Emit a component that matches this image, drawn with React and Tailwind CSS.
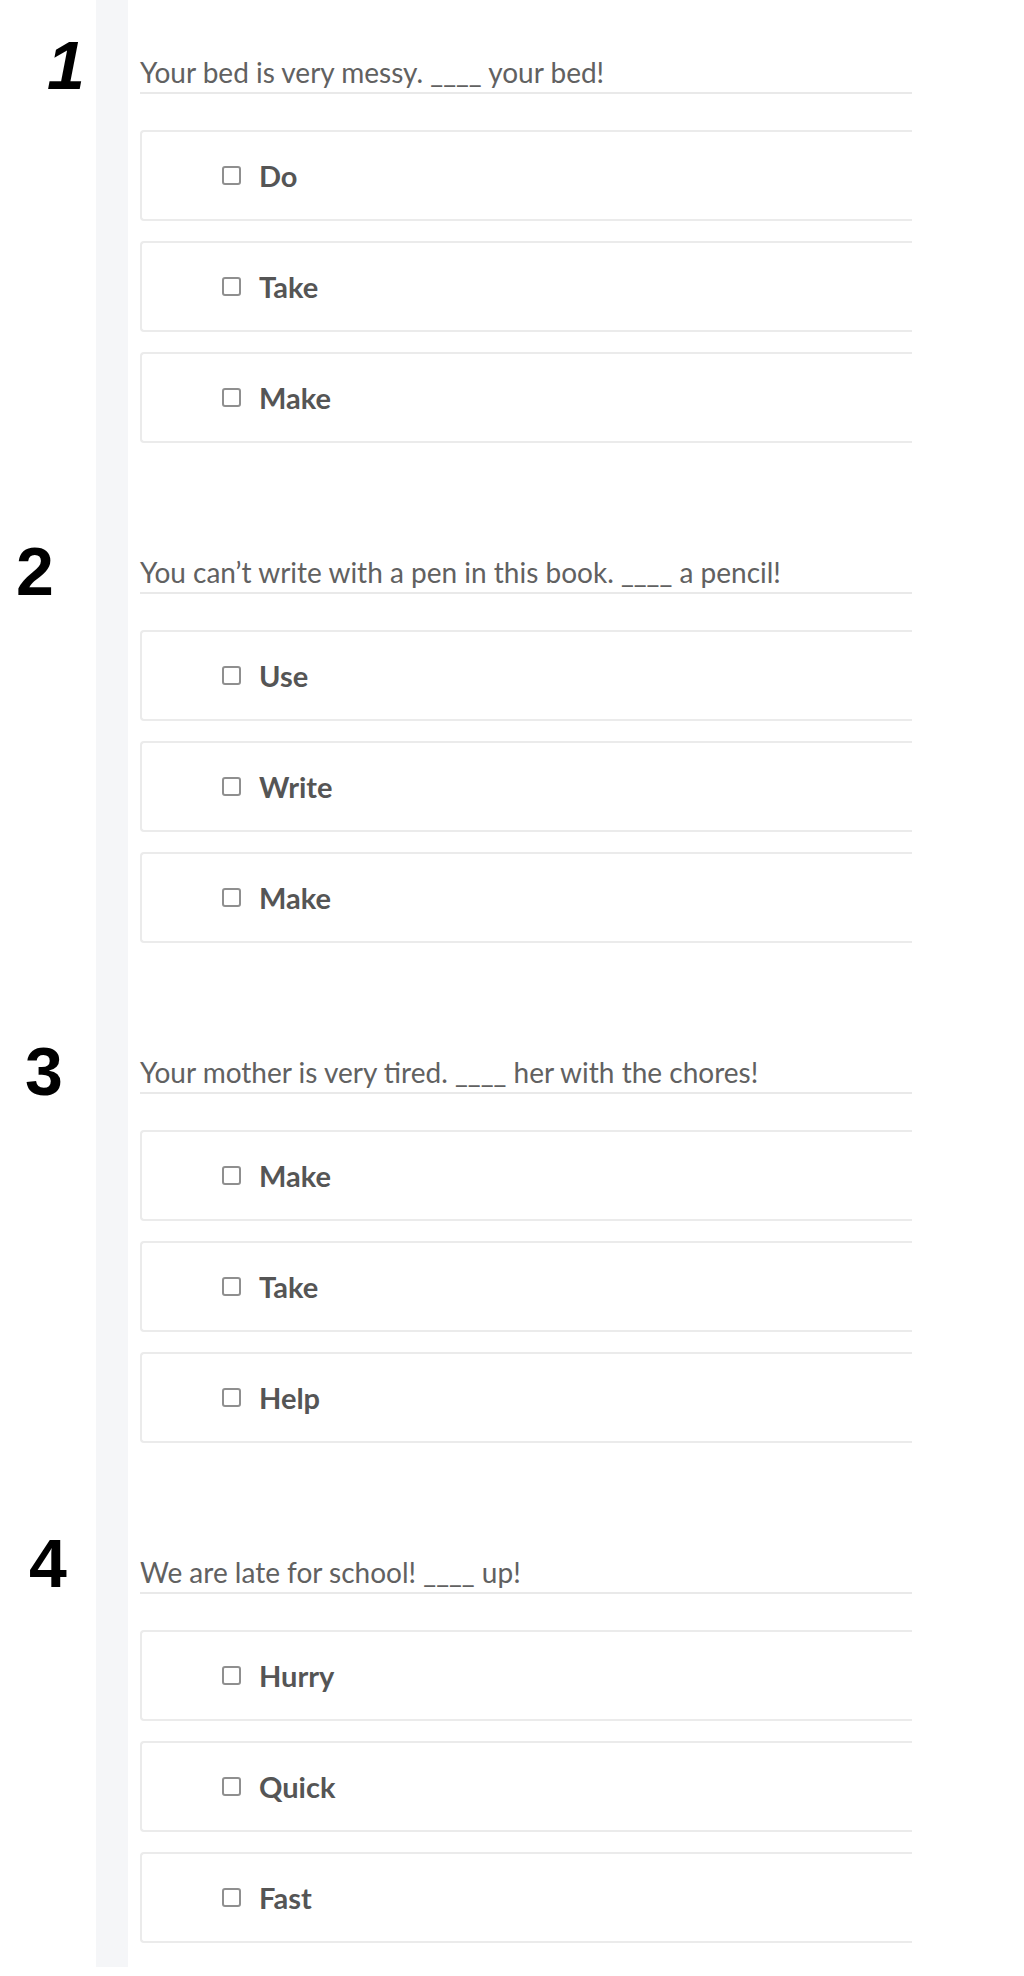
import React from 'react';

const questions = [
  {
    num: '1',
    numClass: 'pl-[47px] pt-[31px] italic',
    text: 'Your bed is very messy. ____ your bed!',
    options: ['Do', 'Take', 'Make']
  },
  {
    num: '2',
    numClass: 'pl-[16px] pt-[37px]',
    text: 'You can\u2019t write with a pen in this book. ____ a pencil!',
    options: ['Use', 'Write', 'Make']
  },
  {
    num: '3',
    numClass: 'pl-[25px] pt-[37px]',
    text: 'Your mother is very tired. ____ her with the chores!',
    options: ['Make', 'Take', 'Help']
  },
  {
    num: '4',
    numClass: 'pl-[29px] pt-[29px]',
    text: 'We are late for school! ____ up!',
    options: ['Hurry', 'Quick', 'Fast']
  }
];

const OptionBox = ({ label }) => (
  <div className="h-[91px] flex items-center pl-[80px] border-2 border-r-0 border-[#ebebeb] rounded-l-[4px] bg-white">
    <span className="w-[19px] h-[19px] border-2 border-[#8f8f8f] rounded-[3px] bg-white"></span>
    <span className="ml-[18px] text-[29px] font-bold text-[#555555] leading-none">
      {label}
    </span>
  </div>
);

const QuestionRow = ({ q, last }) => (
  <div className={`flex ${last ? 'h-[467px]' : 'h-[500px]'}`}>
    {/* Number */}
    <div className="w-[96px] shrink-0">
      <div
        className={`${q.numClass} text-[68px] font-bold leading-none text-black`}
        style={{ fontFamily: '"Liberation Sans", Arial, sans-serif' }}
      >
        {q.num}
      </div>
    </div>

    {/* Side strip */}
    <div className="w-[32px] shrink-0 bg-[#f5f6f8]" />

    {/* Question + options */}
    <div className="w-[784px] pl-[12px] overflow-hidden">
      <div className="pt-[58px] pb-[6px] border-b-2 border-[#e9e9e9]">
        <p className="text-[28px] leading-[28px] text-[#616161]">{q.text}</p>
      </div>
      <div className="mt-[36px] flex flex-col gap-[20px]">
        {q.options.map((opt) => (
          <OptionBox key={opt} label={opt} />
        ))}
      </div>
    </div>
  </div>
);

export default function App() {
  return (
    <div
      className="w-[1024px] h-[1976px] bg-white"
      style={{ fontFamily: 'Lato, "Open Sans", sans-serif' }}
    >
      {questions.map((q, i) => (
        <QuestionRow key={q.num} q={q} last={i === questions.length - 1} />
      ))}
    </div>
  );
}
